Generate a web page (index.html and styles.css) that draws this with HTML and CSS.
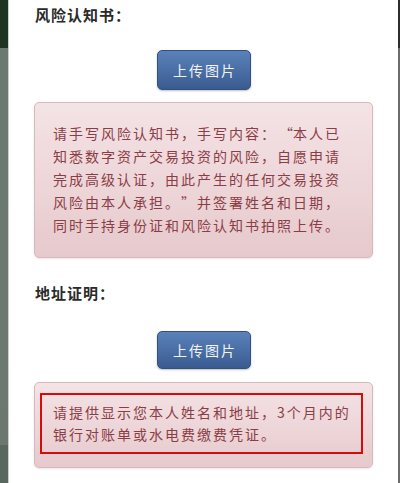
FILE: index.html
```html
<!DOCTYPE html>
<html lang="zh-CN">
<head>
<meta charset="utf-8">
<link rel="stylesheet" href="styles.css">
</head>
<body>
<div class="screen">
  <div class="edge-left"></div>
  <div class="panel">
    <div class="title">风险认知书：</div>
    <div class="btn-row"><button class="upload">上传图片</button></div>
    <div class="note note-risk">
      <p>请手写风险认知书，手写内容：<span class="q q-open">“</span>本人已<br>知悉数字资产交易投资的风险，自愿申请<br>完成高级认证，由此产生的任何交易投资<br>风险由本人承担。<span class="q q-close">”</span>并签署姓名和日期，<br>同时手持身份证和风险认知书拍照上传。</p>
    </div>
    <div class="title title-second">地址证明：</div>
    <div class="btn-row btn-row-second"><button class="upload upload-second">上传图片</button></div>
    <div class="note note-address">
      <div class="highlight">
        <p>请提供显示您本人姓名和地址，3个月内的<br>银行对账单或水电费缴费凭证。</p>
      </div>
    </div>
  </div>
  <div class="edge-right"></div>
</div>
</body>
</html>
```
FILE: styles.css
```css
html, body {
  margin: 0;
  padding: 0;
  width: 400px;
  height: 483px;
  overflow: hidden;
  background: #fff;
}
.screen {
  display: flex;
  width: 400px;
  height: 483px;
  font-family: "Noto Sans CJK SC", "Liberation Sans", sans-serif;
}
.edge-left {
  width: 8px;
  flex: none;
  border-right: 1px solid #c9cfcb;
  background: linear-gradient(to bottom, #1f3323 0, #1f3323 48px, #6a7a70 48px, #6c786f 445px, #58685e 445px, #58685e 100%);
}
.edge-right {
  width: 2px;
  flex: none;
  background: linear-gradient(to bottom, #2a2f2c 0, #2a2f2c 48px, #6a6d6b 48px, #6a6d6b 100%);
}
.panel {
  flex: 1;
  background: #fff;
  padding: 5px 25px 0 25px;
}
.title {
  height: 20px;
  line-height: 20px;
  font-size: 15px;
  font-weight: bold;
  color: #2a2a2a;
  letter-spacing: 1px;
  padding-left: 1px;
}
.title-second {
  margin-top: 25px;
}
.btn-row {
  display: flex;
  justify-content: center;
  margin-top: 25px;
  padding-left: 1px;
}
.btn-row-second {
  margin-top: 28px;
}
.upload {
  width: 94px;
  height: 40px;
  border: 1px solid #34507c;
  border-radius: 5px;
  background: linear-gradient(to bottom, #5a81b9 0%, #4a6fa6 50%, #3a5b90 100%);
  box-shadow: 0 1px 2px rgba(0, 0, 0, 0.25);
  color: #f2f4f8;
  font-family: "Noto Sans CJK SC", sans-serif;
  font-size: 14px;
  letter-spacing: 2px;
  padding: 0 0 0 2px;
}
.upload-second {
  height: 38px;
}
.note {
  margin-top: 12px;
  border: 1px solid #d7b9bd;
  border-radius: 5px;
  background: linear-gradient(to bottom, #f4e3e5 0%, #ecd4d7 60%, #e6c9cc 100%);
  box-shadow: 0 1px 2px rgba(120, 80, 85, 0.15);
  color: #8b3d47;
  font-size: 14px;
  letter-spacing: 2px;
}
.note p {
  margin: 0;
  white-space: nowrap;
}
.q {
  display: inline-block;
  width: 16px;
  letter-spacing: 0;
}
.q-open {
  text-align: right;
  padding-right: 0;
}
.q-close {
  text-align: left;
}
.note-risk {
  padding: 19px 10px 20px 18px;
  line-height: 23px;
}
.note-address {
  margin-top: 13px;
  padding: 10px 9px 13px 5px;
  line-height: 22px;
}
.highlight {
  border: 2px solid #d40c0c;
  padding: 6px 6px 7px 11px;
}
```
